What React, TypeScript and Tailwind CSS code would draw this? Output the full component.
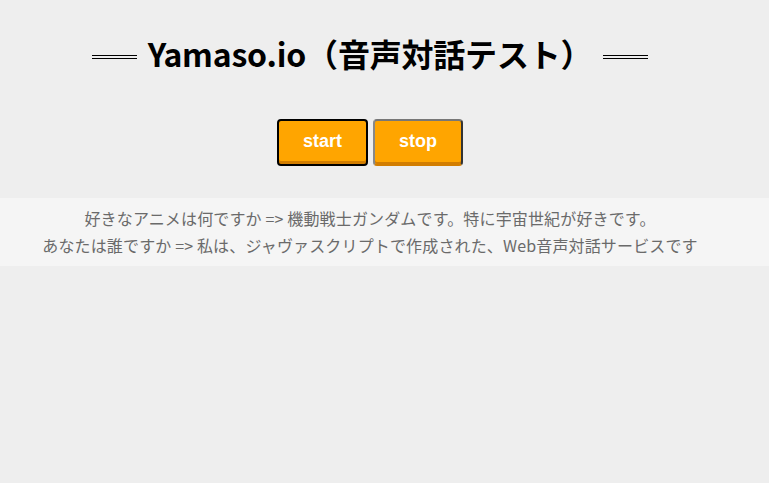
import React from "react";

const Line = () => (
  <div className="w-[45px] h-[4px] mt-[8px] border-y border-black" />
);

export default function App() {
  return (
    <div
      className="min-h-[483px] bg-[#eeeeee] text-black"
      style={{ fontFamily: '"Noto Sans CJK JP", "Noto Sans", sans-serif' }}
    >
      <div className="pr-[29px] pt-[27px] flex items-center justify-center gap-[11px]">
        <Line />
        <h1 className="text-[32px] leading-[52px] font-bold tracking-[-0.2px]">
          Yamaso.io（音声対話テスト）
        </h1>
        <Line />
      </div>
      <div className="pr-[29px] mt-[40px] flex justify-center gap-[5px]">
        <button
          className="w-[91px] h-[47px] rounded-[4px] border-2 border-black bg-[#ffa500] text-white text-[18px] font-bold shadow-[inset_0_-3px_0_#d27d00] pb-[2px]"
          style={{ fontFamily: '"Liberation Sans", Arial, sans-serif' }}
        >
          start
        </button>
        <button
          className="w-[90px] h-[47px] rounded-[4px] border-2 border-t-[#777777] border-l-[#888888] border-r-[#333333] border-b-[#d27d00] bg-[#ffa500] text-white text-[18px] font-bold shadow-[inset_0_-2px_0_#d27d00] pb-[2px]"
          style={{ fontFamily: '"Liberation Sans", Arial, sans-serif' }}
        >
          stop
        </button>
      </div>
      <div className="mt-[32px] bg-[#f5f5f5] py-[7px]">
        <div className="pr-[29px] text-center text-[16px] leading-[27px] text-[#6a6a6a] tracking-[0.15px]">
          <p>好きなアニメは何ですか =&gt; 機動戦士ガンダムです。特に宇宙世紀が好きです。</p>
          <p>あなたは誰ですか =&gt; 私は、ジャヴァスクリプトで作成された、Web音声対話サービスです</p>
        </div>
      </div>
    </div>
  );
}
